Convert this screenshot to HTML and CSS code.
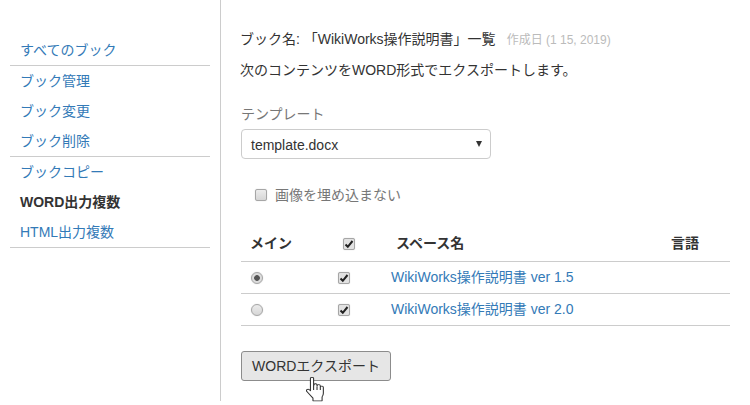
FILE: index.html
```html
<!DOCTYPE html>
<html lang="ja">
<head>
<meta charset="utf-8">
<title>WORD出力複数</title>
<link rel="stylesheet" href="styles.css">
</head>
<body>
<div class="page">
  <nav class="side">
    <div class="group first"><a href="#">すべてのブック</a></div>
    <div class="group"><a href="#">ブック管理</a><a href="#">ブック変更</a><a href="#">ブック削除</a></div>
    <div class="group"><a href="#">ブックコピー</a><a href="#" class="active">WORD出力複数</a><a href="#">HTML出力複数</a></div>
  </nav>
  <main class="main">
    <p class="title">ブック名: 「WikiWorks操作説明書」一覧<small class="date">作成日 (1 15, 2019)</small></p>
    <p class="lead">次のコンテンツをWORD形式でエクスポートします。</p>
    <div class="field-label">テンプレート</div>
    <div class="select"><span>template.docx</span><i class="arrow"></i></div>
    <label class="embed"><input type="checkbox" class="cb plain">画像を埋め込まない</label>
    <table class="spaces">
      <thead>
        <tr><th class="c-main">メイン</th><th class="c-check"><input type="checkbox" class="cb" checked></th><th class="c-name">スペース名</th><th class="c-lang">言語</th></tr>
      </thead>
      <tbody>
        <tr><td class="c-main"><input type="radio" name="m" class="rb" checked></td><td class="c-check"><input type="checkbox" class="cb" checked></td><td class="c-link"><a href="#">WikiWorks操作説明書 ver 1.5</a></td><td></td></tr>
        <tr><td class="c-main"><input type="radio" name="m" class="rb"></td><td class="c-check"><input type="checkbox" class="cb" checked></td><td class="c-link"><a href="#">WikiWorks操作説明書 ver 2.0</a></td><td></td></tr>
      </tbody>
    </table>
    <div class="actions">
      <button class="btn" type="button">WORDエクスポート</button>
      <svg class="hand" width="19" height="25" viewBox="2 1 15 24" preserveAspectRatio="none" aria-hidden="true">
        <path d="M5.5 2.500c0-1.600 2.500-1.600 2.500 0v7l.3-1.200c.3-1.300 2.400-1.100 2.400.4v1l.2-.6c.4-1.200 2.400-1 2.400.5v.8c.4-1 2.400-.8 2.400.7v5.400c0 1.500-.4 2.600-1 3.600v3.800H7.500v-2.600c-1.600-2-3-3.800-4.800-6.300-1.100-1.600.7-3 2-1.800l.8 1z" fill="#fff" stroke="#333" stroke-width=".85" stroke-linejoin="round"/>
        <path d="M8 9.500v4M10.700 10v3.500M13.300 10.500v3" fill="none" stroke="#333" stroke-width=".85"/>
      </svg>
    </div>
  </main>
</div>
</body>
</html>
```
FILE: styles.css
```css
* { box-sizing: border-box; }
html, body { margin: 0; padding: 0; background: #fff; }
body {
  font-family: "Liberation Sans", "Noto Sans CJK JP", sans-serif;
  font-size: 14px;
  line-height: 20px;
  color: #333;
  height: 405px;
  overflow: hidden;
}
a { color: #337ab7; text-decoration: none; }
.page { display: flex; height: 401px; }
.side { width: 221px; padding: 34px 10px 0; border-right: 1px solid #ccc; }
.group { width: 200px; display: flex; flex-direction: column; border-bottom: 1px solid #ccc; }
.group.first { height: 32px; padding-top: 1px; }
.group a { display: block; height: 30px; padding: 5px 10px; white-space: nowrap; }
.group.first a { height: 30px; }
.group a.active { color: #333; font-weight: bold; }
.main { flex: 1; padding: 29px 20px 0; min-width: 0; }
.title { margin: 0 0 0 -1px; height: 20px; }
.date { margin-left: 11px; font-size: 12px; color: #bbb; }
.lead { margin: 11px 0 0 -1px; height: 20px; }
.field-label { margin-top: 24px; color: #777; height: 20px; }
.select {
  margin-top: 5px;
  width: 250px; height: 30px;
  border: 1px solid #ccc; border-radius: 4px;
  padding: 6px 9px 4px;
  display: flex; align-items: center; justify-content: space-between;
}
.arrow { width: 0; height: 0; margin: -2px -1px 0 0; border: 3.5px solid transparent; border-top: 6px solid #333; border-bottom: 0; }
.embed { display: flex; align-items: center; margin: 26px 0 0 14px; height: 20px; color: #777; }
.cb, .rb {
  appearance: none; -webkit-appearance: none;
  margin: 0; display: inline-block; vertical-align: middle;
  background: linear-gradient(#ececec, #d6d6d6);
  box-shadow: 0 0 1px rgba(0,0,0,.25);
}
.cb { width: 12px; height: 12px; border: 1px solid #a6a6a6; border-radius: 2px; position: relative; }
.cb:checked { background: #e2e2e2 url("data:image/svg+xml,%3Csvg xmlns='http://www.w3.org/2000/svg' width='10' height='10'%3E%3Cpath d='M1.500 5.500l2.300 2.300 4.700-5.800' fill='none' stroke='%23222' stroke-width='2'/%3E%3C/svg%3E") center no-repeat; }
.cb.plain { margin-right: 8px; }
.rb { width: 12px; height: 12px; border: 1px solid #a6a6a6; border-radius: 50%; }
.rb:checked { background: radial-gradient(circle, #555 0 2.5px, #dcdcdc 3.2px); }
.spaces { margin-top: 16px; width: 489px; border-collapse: collapse; table-layout: fixed; }
.spaces th, .spaces td { padding: 0; border-bottom: 1px solid #ccc; text-align: left; }
.spaces thead tr { height: 40px; }
.spaces tbody tr { height: 32px; }
.spaces th { font-weight: bold; padding-top: 4px; }
.c-main { width: 96px; padding-left: 9px !important; }
.spaces td.c-main { padding-left: 10px !important; }
.c-check { width: 54px; }
td.c-check { padding-left: 1px !important; }
th.c-check { padding-left: 6px !important; }
.c-name { padding-left: 0 !important; width: 280px; }
th.c-name { padding-left: 5px !important; }
.c-lang { padding-left: 0; }
.actions { position: relative; margin-top: 25px; }
.btn {
  width: 150px; height: 30px;
  font: inherit; color: #333;
  background: #e6e6e6;
  border: 1px solid #8c8c8c; border-radius: 3px;
  padding: 0;
}
.hand { position: absolute; left: 65px; top: 26px; }
```
